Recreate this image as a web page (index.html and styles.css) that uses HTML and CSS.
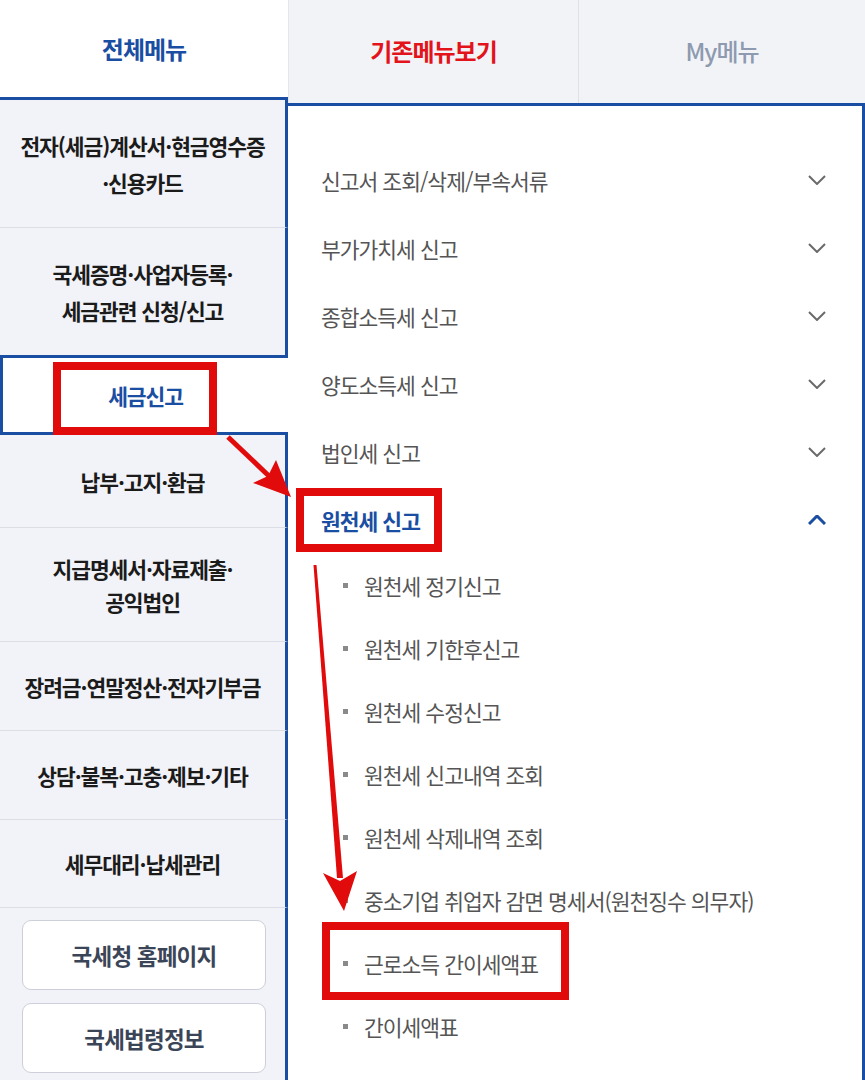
FILE: index.html
```html
<!DOCTYPE html>
<html lang="ko">
<head>
<meta charset="utf-8">
<title>전체메뉴</title>
<link rel="stylesheet" href="styles.css">
</head>
<body>
<div class="page">
  <div class="tabs">
    <div class="tab tab-all">전체메뉴</div>
    <div class="tab tab-old">기존메뉴보기</div>
    <div class="tab tab-my">My메뉴</div>
  </div>
  <div class="main">
    <div class="side">
      <div class="side-item h128">전자(세금)계산서·현금영수증<br>·신용카드</div>
      <div class="side-item h127 no-line">국세증명·사업자등록·<br>세금관련 신청/신고</div>
      <div class="side-item active">세금신고</div>
      <div class="side-item h93">납부·고지·환급</div>
      <div class="side-item h114 tight">지급명세서·자료제출·<br>공익법인</div>
      <div class="side-item h89">장려금·연말정산·전자기부금</div>
      <div class="side-item h89">상담·불복·고충·제보·기타</div>
      <div class="side-item h88">세무대리·납세관리</div>
      <div class="side-links">
        <a class="link-btn">국세청 홈페이지</a>
        <a class="link-btn">국세법령정보</a>
      </div>
    </div>
    <div class="panel">
      <div class="menu-row"><span>신고서 조회/삭제/부속서류</span><svg class="chev" viewBox="0 0 18 10"><polyline points="1,1 9,9 17,1"/></svg></div>
      <div class="menu-row"><span>부가가치세 신고</span><svg class="chev" viewBox="0 0 18 10"><polyline points="1,1 9,9 17,1"/></svg></div>
      <div class="menu-row"><span>종합소득세 신고</span><svg class="chev" viewBox="0 0 18 10"><polyline points="1,1 9,9 17,1"/></svg></div>
      <div class="menu-row"><span>양도소득세 신고</span><svg class="chev" viewBox="0 0 18 10"><polyline points="1,1 9,9 17,1"/></svg></div>
      <div class="menu-row"><span>법인세 신고</span><svg class="chev" viewBox="0 0 18 10"><polyline points="1,1 9,9 17,1"/></svg></div>
      <div class="menu-row open"><span>원천세 신고</span><svg class="chev up" viewBox="0 0 18 10"><polyline points="1,9 9,1 17,9"/></svg></div>
      <ul class="sub">
        <li>원천세 정기신고</li>
        <li>원천세 기한후신고</li>
        <li>원천세 수정신고</li>
        <li>원천세 신고내역 조회</li>
        <li>원천세 삭제내역 조회</li>
        <li>중소기업 취업자 감면 명세서(원천징수 의무자)</li>
        <li>근로소득 간이세액표</li>
        <li>간이세액표</li>
      </ul>
    </div>
  </div>
  <svg class="marks" viewBox="0 0 865 1080" width="865" height="1080">
    <rect x="57" y="366" width="156" height="65" class="box"/>
    <rect x="300" y="492" width="138" height="56" class="box"/>
    <rect x="326" y="926" width="239" height="70" class="box"/>
    <line x1="228" y1="437" x2="270" y2="477" class="shaft"/>
    <polygon points="291,497 276,460 268,476 253,483" class="head"/>
    <polygon points="313.5,565 316.5,565 343,878 337,878" class="head"/>
    <polygon points="344,911 323,873 340,881 357,871" class="head"/>
  </svg>
</div>
</body>
</html>
```
FILE: styles.css
```css
* { box-sizing: border-box; margin: 0; padding: 0; }
body { margin: 0; background: #fff; font-family: "Noto Sans CJK KR", "Noto Sans", sans-serif; }
.page { position: relative; width: 865px; height: 1080px; overflow: hidden; background: #fff; }

.tabs { display: flex; height: 100px; align-items: flex-start; }
.tab { display: flex; align-items: center; justify-content: center; font-size: 24px; font-weight: 700; letter-spacing: -1px; }
.tab-all { width: 288px; height: 100px; border-bottom: 3px solid #1a4ea2; color: #1a4ea2; background: #fff; }
.tab-old { width: 290px; height: 103px; background: #f2f3f7; color: #e3131b; border-left: 1px solid #e4e6eb; padding-bottom: 3px; }
.tab-my { flex: 1; height: 103px; background: #f2f3f7; color: #8d9ab0; font-weight: 500; border-left: 1px solid #dfe1e6; padding-bottom: 3px; }

.main { display: flex; height: 980px; }
.side { width: 288px; display: flex; flex-direction: column; background: #f2f3f8; }
.side-item { display: flex; align-items: center; justify-content: center; text-align: center; font-size: 21.5px; font-weight: 700; letter-spacing: -1.1px; line-height: 37px; color: #1b1b1b; border-right: 3px solid #1a4ea2; border-bottom: 1px solid #dcdee5; flex: none; }
.side-item.no-line { border-bottom: none; }
.side-item.tight { line-height: 33px; }
.h128 { height: 128px; }
.h127 { height: 127px; }
.h93 { height: 93px; }
.h114 { height: 114px; }
.h89 { height: 89px; }
.h88 { height: 88px; }
.side-item.active { height: 80px; border: 3px solid #1a4ea2; border-right: none; background: #fff; color: #1a4ea2; }

.side-links { flex: 1; border-right: 3px solid #1a4ea2; padding: 12px 19px 0 22px; display: flex; flex-direction: column; gap: 13px; }
.link-btn { display: flex; align-items: center; justify-content: center; width: 244px; height: 70px; background: #fff; border: 1px solid #cdd0d8; border-radius: 9px; font-size: 22.5px; font-weight: 700; letter-spacing: -0.8px; color: #3b4558; }

.panel { flex: 1; margin-top: 3px; border-top: 3px solid #1a4ea2; border-right: 3px solid #1a4ea2; padding: 40px 36px 0 33px; background: #fff; }
.menu-row { display: flex; justify-content: space-between; align-items: center; height: 68px; font-size: 21.5px; letter-spacing: -1px; color: #555; }
.menu-row.open { color: #1a4ea2; font-weight: 700; }
.chev { width: 18px; height: 10px; fill: none; stroke: #6a6a6a; stroke-width: 2; }
.chev.up { stroke: #1a4ea2; stroke-width: 3; }

.sub { list-style: none; }
.sub li { display: flex; align-items: center; height: 63px; padding-left: 22px; font-size: 21.5px; letter-spacing: -1px; color: #555; }
.sub li::before { content: ""; width: 5px; height: 5px; background: #8a8a8a; margin-right: 16px; flex: none; }

.marks { position: absolute; left: 0; top: 0; pointer-events: none; }
.box { fill: none; stroke: #e10b0b; stroke-width: 8; }
.shaft { stroke: #e10b0b; stroke-width: 5; }
.head { fill: #e10b0b; }
```
